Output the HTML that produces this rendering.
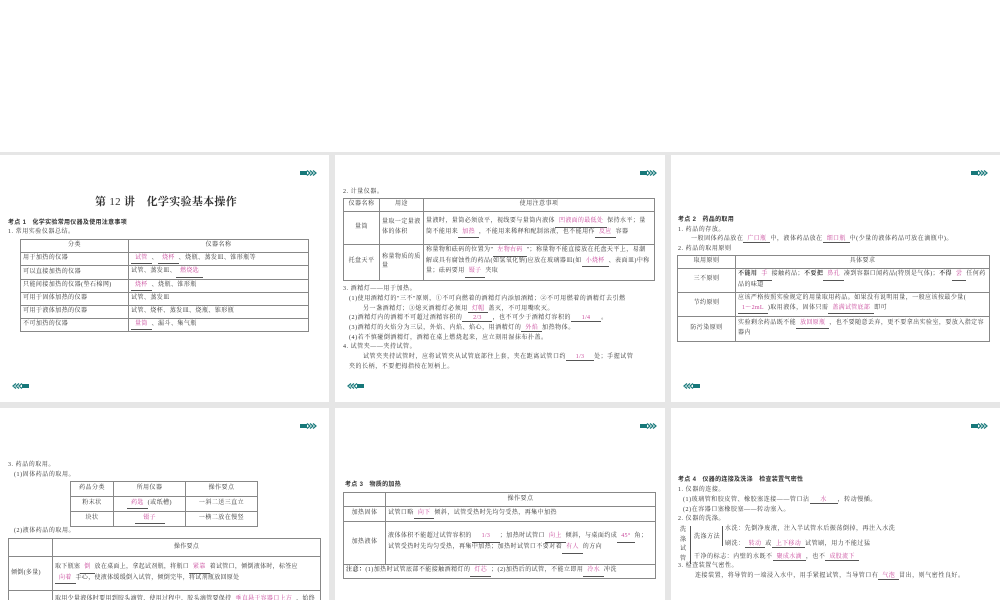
<!DOCTYPE html>
<html><head><meta charset="utf-8"><style>
*{margin:0;padding:0;box-sizing:border-box}
body{width:1000px;height:600px;overflow:hidden;background:#fff;position:relative;font-family:"Liberation Serif","Noto Serif CJK SC",serif;color:#333;font-size:6px;line-height:1}
.bg{position:absolute;left:0;top:152px;width:1000px;height:448px;background:#e6e6e6}
.s{position:absolute;background:#fff;overflow:hidden}
.t{position:absolute;white-space:nowrap;font-size:6px;letter-spacing:0.55px}
.b{font-family:"Liberation Sans","Noto Sans CJK SC",sans-serif;font-weight:bold;letter-spacing:0.3px}
.p{color:#c8479a;border-bottom:0.6px solid #555;display:inline-block;padding:0 4px;text-align:center;letter-spacing:0.3px}
table{position:absolute;border-collapse:collapse;border:1px solid #666;font-size:6px;letter-spacing:0.45px}
td{border:0.6px solid #888;padding:1px 2px;vertical-align:middle;line-height:1.6}
.c{text-align:center}
.ar{position:absolute;width:18px;height:6px}
</style></head><body>
<div class="bg"></div>
<svg width="0" height="0" style="position:absolute"><defs>
<g id="r"><rect x="0" y="1" width="7" height="4" fill="#17787a"/><path d="M7 0.5L10 3L7 5.5M10 0.5L13 3L10 5.5M13 0.5L16 3L13 5.5" fill="none" stroke="#17787a" stroke-width="1.2"/></g>
<g id="l"><rect x="10" y="1" width="7" height="4" fill="#17787a"/><path d="M10 0.5L7 3L10 5.5M7 0.5L4 3L7 5.5M4 0.5L1 3L4 5.5" fill="none" stroke="#17787a" stroke-width="1.2"/></g>
</defs></svg>

<!-- slide 1 -->
<div class="s" style="left:0;top:155px;width:329px;height:247px">
<svg class="ar" style="left:300px;top:15px"><use href="#r"/></svg>
<div class="t b" style="left:95px;top:42px;font-size:11px;font-family:'Liberation Serif','Noto Serif CJK SC',serif">第 <span style="font-weight:normal">12</span> 讲　化学实验基本操作</div>
<div class="t b" style="left:8px;top:65px">考点 1　化学实验常用仪器及使用注意事项</div>
<div class="t" style="left:8px;top:74px">1. 常用实验仪器总结。</div>
<table style="left:20px;top:84px;width:289px">
<tr><td class="c" style="width:108px">分类</td><td class="c">仪器名称</td></tr>
<tr><td>用于加热的仪器</td><td><span class="p">试管</span>、<span class="p">烧杯</span>、烧瓶、蒸发皿、锥形瓶等</td></tr>
<tr><td>可以直接加热的仪器</td><td>试管、蒸发皿、<span class="p">燃烧匙</span></td></tr>
<tr><td>只能间接加热的仪器(垫石棉网)</td><td><span class="p">烧杯</span>、烧瓶、锥形瓶</td></tr>
<tr><td>可用于固体加热的仪器</td><td>试管、蒸发皿</td></tr>
<tr><td>可用于液体加热的仪器</td><td>试管、烧杯、蒸发皿、烧瓶、锥形瓶</td></tr>
<tr><td>不可加热的仪器</td><td><span class="p">量筒</span>、漏斗、集气瓶</td></tr>
</table>
<svg class="ar" style="left:12px;top:228px"><use href="#l"/></svg>
</div>

<!-- slide 2 -->
<div class="s" style="left:335px;top:155px;width:330px;height:247px">
<svg class="ar" style="left:305px;top:15px"><use href="#r"/></svg>
<div class="t" style="left:8px;top:34px">2. 计量仪器。</div>
<table style="left:8px;top:43px;width:312px">
<tr><td class="c" style="width:36px">仪器名称</td><td class="c" style="width:44px">用途</td><td class="c">使用注意事项</td></tr>
<tr style="height:33px"><td class="c">量筒</td><td>量取一定量液体的体积</td><td>量液时，量筒必须放平，视线要与量筒内液体<span class="p">凹液面的最低处</span>保持水平；量筒不能用来<span class="p">加热</span>，不能用来稀释和配制溶液，也不能用作<span class="p">反应</span>容器</td></tr>
<tr style="height:36px"><td class="c">托盘天平</td><td>称量物质的质量</td><td>称量物和砝码的位置为"<span class="p">左物右码</span>"；称量物不能直接放在托盘天平上，易潮解或具有腐蚀性的药品(如氢氧化钠)应放在玻璃器皿(如<span class="p">小烧杯</span>、表面皿)中称量；砝码要用<span class="p">镊子</span>夹取</td></tr>
</table>
<div class="t" style="left:8px;top:131px">3. 酒精灯——用于加热。</div>
<div class="t" style="left:14px;top:141px">(1)使用酒精灯的"三不"原则，①不可向燃着的酒精灯内添加酒精；②不可用燃着的酒精灯去引燃</div>
<div class="t" style="left:28px;top:151px">另一盏酒精灯；③熄灭酒精灯必须用<span class="p">灯帽</span>盖灭，不可用嘴吹灭。</div>
<div class="t" style="left:14px;top:160px">(2)酒精灯内的酒精不可超过酒精容积的<span class="p" style="width:30px">2/3</span>，也不可少于酒精灯容积的<span class="p" style="width:30px">1/4</span>。</div>
<div class="t" style="left:14px;top:170px">(3)酒精灯的火焰分为三层，外焰、内焰、焰心，用酒精灯的<span class="p">外焰</span>加热物体。</div>
<div class="t" style="left:14px;top:180px">(4)若不慎碰倒酒精灯，酒精在桌上燃烧起来，应立刻用湿抹布扑盖。</div>
<div class="t" style="left:8px;top:189px">4. 试管夹——夹持试管。</div>
<div class="t" style="left:28px;top:199px">试管夹夹持试管时，应将试管夹从试管底部往上套，夹在距离试管口约<span class="p" style="width:28px">1/3</span>处；手握试管</div>
<div class="t" style="left:14px;top:209px">夹的长柄，不要把拇指按在短柄上。</div>
<svg class="ar" style="left:12px;top:228px"><use href="#l"/></svg>
</div>

<!-- slide 3 -->
<div class="s" style="left:671px;top:155px;width:329px;height:247px">
<svg class="ar" style="left:300px;top:15px"><use href="#r"/></svg>
<div class="t b" style="left:7px;top:62px">考点 2　药品的取用</div>
<div class="t" style="left:7px;top:72px">1. 药品的存放。</div>
<div class="t" style="left:20px;top:81px">一般固体药品放在<span class="p">广口瓶</span>中，液体药品放在<span class="p">细口瓶</span>中(少量的液体药品可放在滴瓶中)。</div>
<div class="t" style="left:7px;top:91px">2. 药品的取用原则</div>
<table style="left:6px;top:100px;width:313px">
<tr><td class="c" style="width:58px">取用原则</td><td class="c">具体要求</td></tr>
<tr style="height:24px"><td class="c">三不原则</td><td><b>不能用</b><span class="p">手</span>接触药品；<b>不要把</b><span class="p">鼻孔</span>凑到容器口闻药品(特别是气体)；<b>不得</b><span class="p">尝</span>任何药品的味道</td></tr>
<tr style="height:24px"><td class="c">节约原则</td><td>应该严格按照实验规定的用量取用药品。如果没有说明用量，一般应该按最少量(<span class="p">1～2mL</span>)取用液体，固体只需<span class="p">盖满试管底部</span>即可</td></tr>
<tr style="height:25px"><td class="c">防污染原则</td><td>实验剩余药品既不能<span class="p">放回原瓶</span>，也不要随意丢弃，更不要拿出实验室，要放入指定容器内</td></tr>
</table>
<svg class="ar" style="left:12px;top:228px"><use href="#l"/></svg>
</div>

<!-- slide 4 -->
<div class="s" style="left:0;top:408px;width:329px;height:192px">
<svg class="ar" style="left:300px;top:15px"><use href="#r"/></svg>
<div class="t" style="left:8px;top:54px">3. 药品的取用。</div>
<div class="t" style="left:14px;top:64px">(1)固体药品的取用。</div>
<table style="left:70px;top:73px;width:188px">
<tr style="height:15px"><td class="c" style="width:43px">药品分类</td><td class="c" style="width:72px">所用仪器</td><td class="c">操作要点</td></tr>
<tr style="height:15px"><td class="c">粉末状</td><td class="c"><span class="p">药匙</span>(或纸槽)</td><td class="c">一斜二送三直立</td></tr>
<tr style="height:15px"><td class="c">块状</td><td class="c"><span class="p" style="width:30px">镊子</span></td><td class="c">一横二放在慢竖</td></tr>
</table>
<div class="t" style="left:14px;top:120px">(2)液体药品的取用。</div>
<table style="left:8px;top:130px;width:313px;letter-spacing:0.3px">
<tr style="height:18px"><td style="width:44px"></td><td class="c">操作要点</td></tr>
<tr style="height:34px"><td>倾倒(多量)</td><td>取下瓶塞<span class="p">倒</span>放在桌面上，拿起试剂瓶，将瓶口<span class="p">紧靠</span>着试管口，倾倒液体时，标签应<span class="p">向着</span>手心，使液体缓缓倒入试管，倾倒完毕，将试剂瓶放回原处</td></tr>
<tr style="height:30px"><td>滴加(少量)</td><td>取用少量液体时要用到胶头滴管，使用过程中，胶头滴管要保持<span class="p">垂直悬于容器口上方</span>，始终保持橡胶乳头在上</td></tr>
</table>
</div>

<!-- slide 5 -->
<div class="s" style="left:335px;top:408px;width:330px;height:192px">
<svg class="ar" style="left:305px;top:15px"><use href="#r"/></svg>
<div class="t b" style="left:10px;top:74px">考点 3　物质的加热</div>
<table style="left:8px;top:84px;width:313px">
<tr style="height:14px"><td style="width:42px"></td><td class="c">操作要点</td></tr>
<tr style="height:15px"><td class="c">加热固体</td><td>试管口略<span class="p">向下</span>倾斜，试管受热时先均匀受热，再集中加热</td></tr>
<tr style="height:43px"><td class="c">加热液体</td><td>液体体积不能超过试管容积的<span class="p" style="width:28px">1/3</span>；加热时试管口<span class="p">向上</span>倾斜，与桌面约成<span class="p">45°</span>角；试管受热时先均匀受热，再集中加热；加热时试管口不要对着<span class="p">有人</span>的方向</td></tr>
<tr style="height:14px"><td colspan="2"><b>注意：</b>(1)加热时试管底部不能接触酒精灯的<span class="p">灯芯</span>；(2)加热后的试管，不能立即用<span class="p">冷水</span>冲洗</td></tr>
</table>
</div>

<!-- slide 6 -->
<div class="s" style="left:671px;top:408px;width:329px;height:192px">
<svg class="ar" style="left:300px;top:15px"><use href="#r"/></svg>
<div class="t b" style="left:7px;top:69px">考点 4　仪器的连接及洗涤　检查装置气密性</div>
<div class="t" style="left:7px;top:79px">1. 仪器的连接。</div>
<div class="t" style="left:12px;top:89px">(1)玻璃管和胶皮管、橡胶塞连接——管口沾<span class="p" style="width:28px">水</span>，转动慢插。</div>
<div class="t" style="left:12px;top:99px">(2)在容器口塞橡胶塞——转动塞入。</div>
<div class="t" style="left:7px;top:108px">2. 仪器的洗涤。</div>
<div class="t" style="left:9px;top:118px;line-height:1.6;white-space:normal;width:8px">洗涤试管</div>
<div style="position:absolute;left:19px;top:118px;width:3px;height:38px;border-left:0.6px solid #555"></div>
<div class="t" style="left:23px;top:126px">洗涤方法</div>
<div style="position:absolute;left:51px;top:118px;width:3px;height:20px;border-left:0.6px solid #555"></div>
<div class="t" style="left:54px;top:118px">水洗：先倒净废液，注入半试管水后振荡倒掉，再注入水洗</div>
<div class="t" style="left:54px;top:133px">刷洗：<span class="p">转动</span>或<span class="p">上下移动</span>试管刷，用力不能过猛</div>
<div class="t" style="left:23px;top:146px">干净的标志：内壁的水既不<span class="p">聚成水滴</span>，也不<span class="p">成股流下</span></div>
<div class="t" style="left:7px;top:155px">3. 检查装置气密性。</div>
<div class="t" style="left:24px;top:165px">连接装置，将导管的一端浸入水中，用手紧握试管，当导管口有<span class="p">气泡</span>冒出，则气密性良好。</div>
</div>
</body></html>
